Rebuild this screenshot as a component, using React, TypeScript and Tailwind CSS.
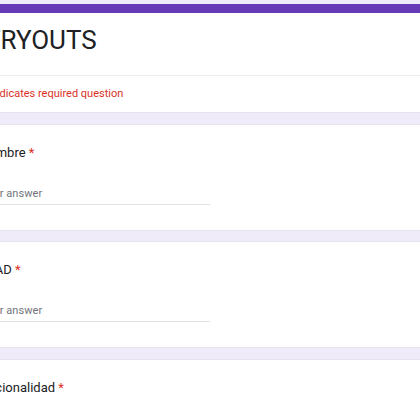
import React from "react";

function Question({ label, answer }: { label: string; answer: boolean }) {
  return (
    <div className="h-[107px] bg-white border-y border-[#e6e3ec] pt-[18px]">
      <div className="ml-[-21px] text-[13px] leading-[20px] text-[#202124]">
        {label} <span className="text-[#d93025]">*</span>
      </div>
      {answer && (
        <div className="mt-[23px] w-[210px]">
          <div className="ml-[-19px] text-[11px] leading-[16px] tracking-[0.05px] text-[#70757a]">
            Your answer
          </div>
          <div className="mt-[2px] h-px bg-[#e3e3e3]" />
        </div>
      )}
    </div>
  );
}

export default function App() {
  return (
    <div className="min-h-[420px] h-[420px] overflow-hidden bg-[#f0ebf8] pt-[4px] font-['Roboto',sans-serif]">
      <div className="bg-white border-b border-[#e6e3ec]">
        <div className="h-[9px] bg-[#673ab7]" />
        <div className="h-[62px] pt-[11px]">
          <div className="ml-[-15px] text-[26px] leading-[32px] text-[#202124]">TRYOUTS</div>
        </div>
        <div className="h-px bg-[#ececec]" />
        <div className="h-[36px] pt-[10px]">
          <div className="ml-[-17px] text-[11px] leading-[16px] tracking-[0px] text-[#d93025]">
            * Indicates required question
          </div>
        </div>
      </div>
      <div className="h-[11px]" />
      <Question label="Nombre" answer />
      <div className="h-[10px]" />
      <Question label="EDAD" answer />
      <div className="h-[11px]" />
      <Question label="Nacionalidad" answer />
    </div>
  );
}
